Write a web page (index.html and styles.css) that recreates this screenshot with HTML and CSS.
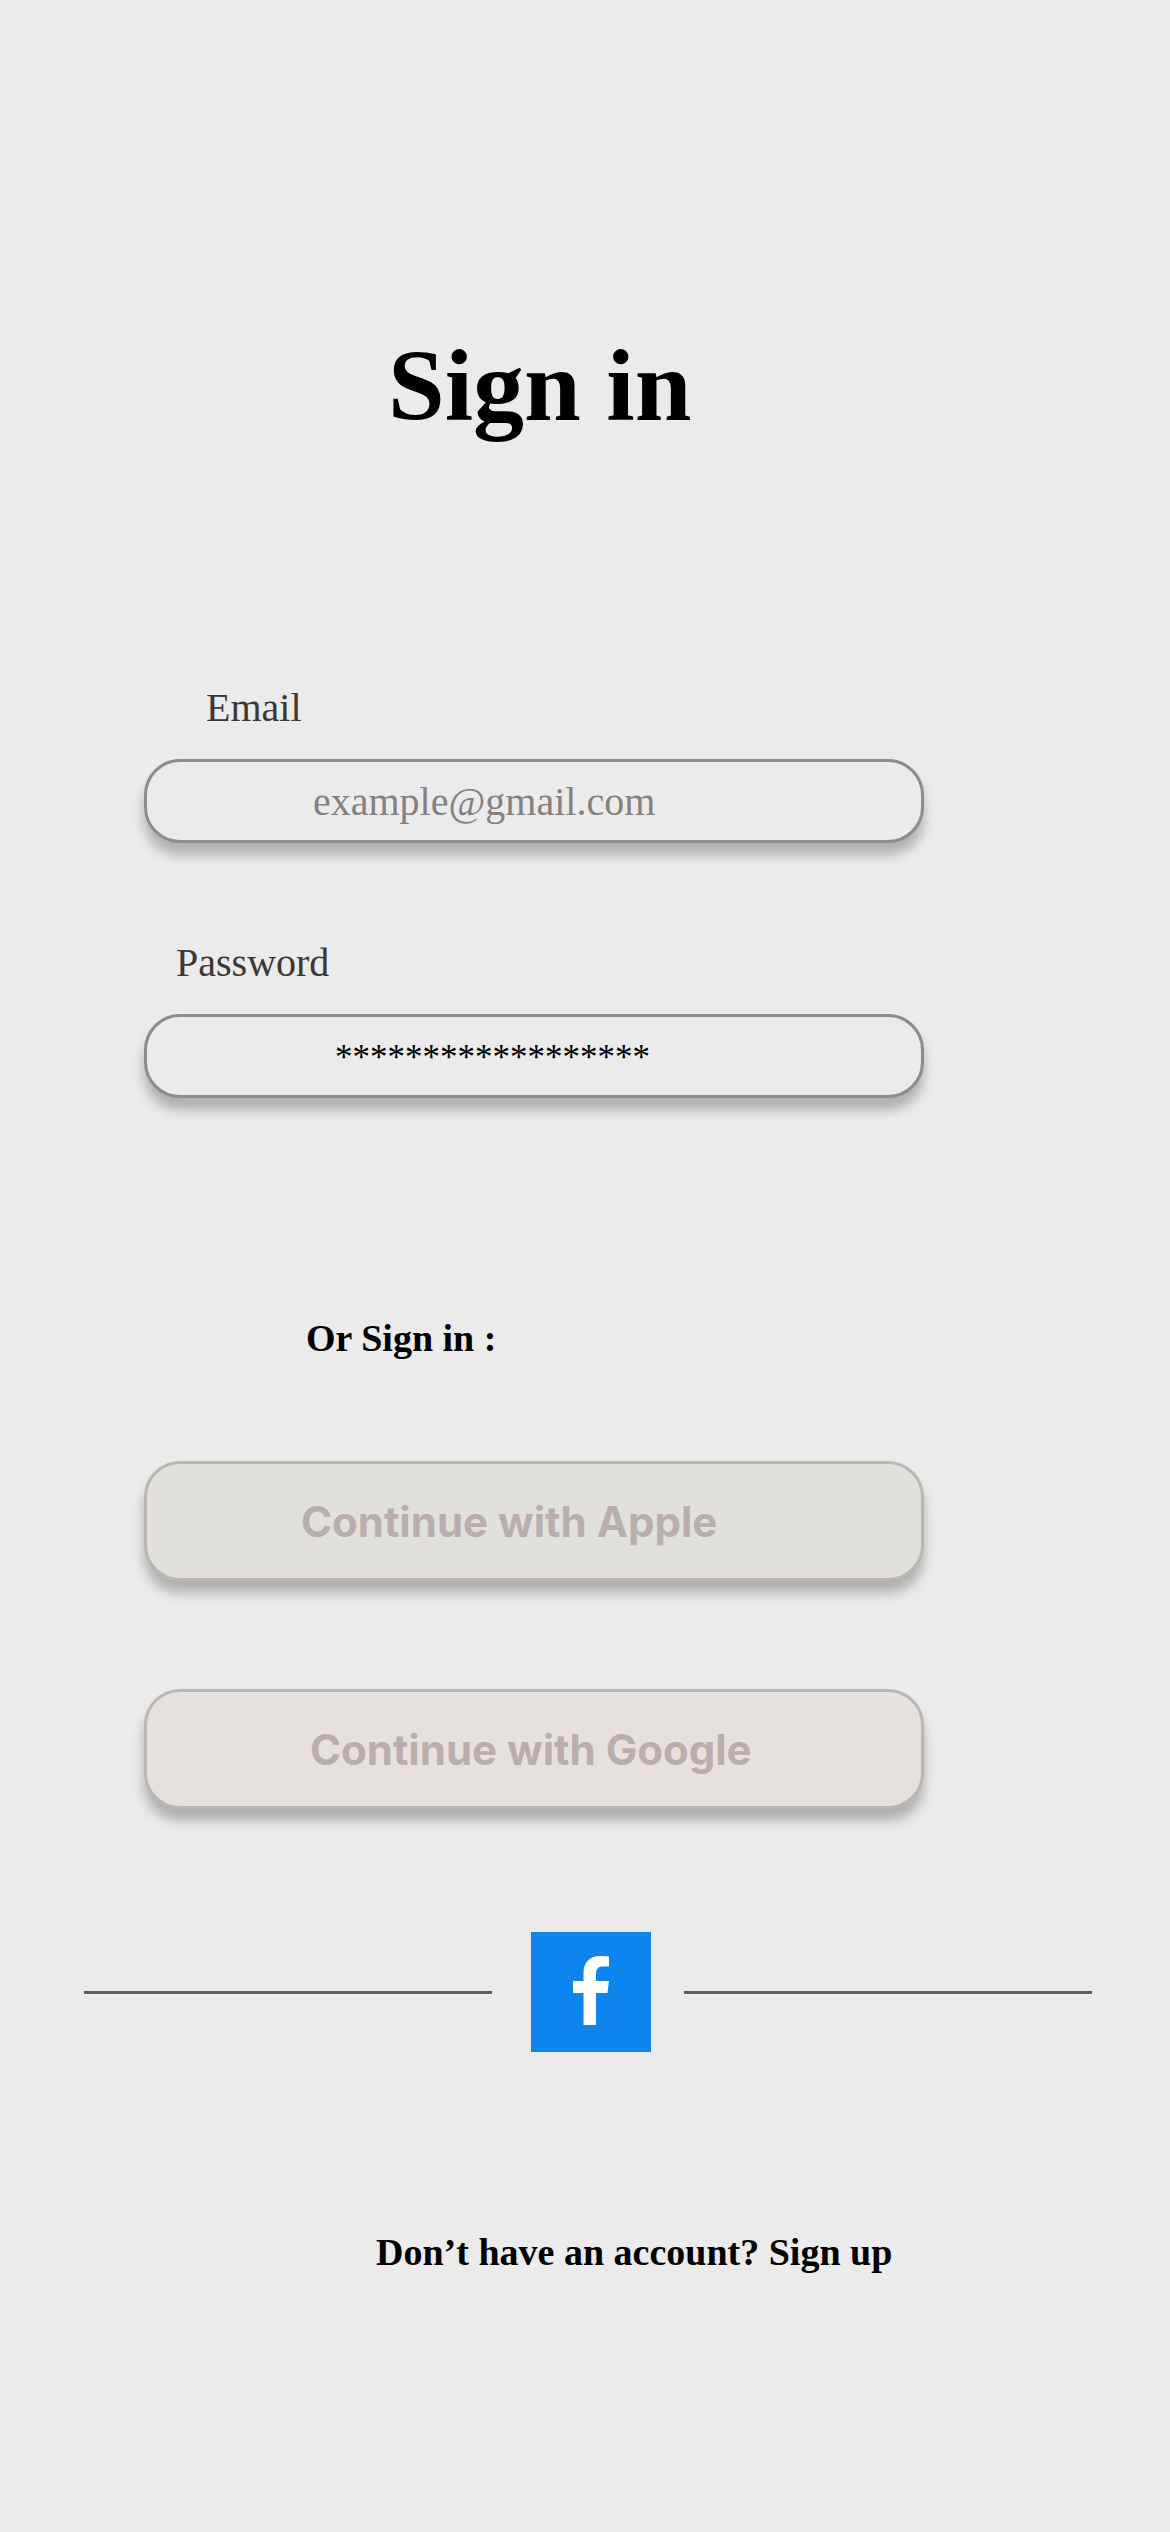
FILE: index.html
```
<!DOCTYPE html>
<html lang="en">
<head>
  <title>Sign in</title>
  <meta charset="UTF-8" />
  <meta name="viewport" content="width=device-width, initial-scale=1.0"/>
  <link rel="stylesheet" href="styles.css">
</head>
<body>
  <h1>Sign in</h1>

  <form class="form">
    <label class="email-label" for="email">Email</label>
    <input class="box email" type="email" id="email" placeholder="example@gmail.com" />

    <label class="password-label" for="password">Password</label>
    <input class="box password" type="text" id="password" value="******************" />

    <p class="or">Or Sign in :</p>
    <button class="box apple" type="button">Continue with Apple</button>
    <button class="box google" type="button">Continue with Google</button>
  </form>

  <div class="divider">
    <span class="line"></span>
    <a class="facebook" href="#" aria-label="Facebook">
      <svg viewBox="0 0 120 120" aria-hidden="true">
        <path fill="#fff" d="M78 24.500V34.500H72C67 34.500 65 37 65 42V49H78L76.500 61H65V93H52.500V61H42V49H52.500V41C52.500 30 59 24 69 24C73 24 76 24.200 78 24.500Z"/>
      </svg>
    </a>
    <span class="line"></span>
  </div>

  <p class="signup">Don’t have an account? <a href="#">Sign up</a></p>
</body>
</html>
```
FILE: styles.css
```
* { box-sizing: border-box; }
body { margin: 0; padding: 326px 0 200px; background: #ebebeb; color: #000; font-family: "Liberation Serif", serif; }
h1 { margin: 0; padding-left: 388px; font-size: 102px; line-height: 120px; }
p { margin: 0; font-weight: bold; font-size: 38px; line-height: 48px; }
label { display: block; margin-bottom: 27px; font-size: 40px; line-height: 48px; color: #3d3636; }

.form { width: 66.667%; margin: 238px 0 0 144px; }
.email-label { padding-left: 62px; }
.password-label { padding-left: 32px; }

.box { display: block; width: 100%; border: 3px solid #8c8c8c; border-radius: 36px; background: #ebebeb; box-shadow: 0 12px 12px rgba(0, 0, 0, 0.25); text-align: left; }
input.box { height: 84px; font-family: inherit; color: #000; outline: none; }
.email { margin-bottom: 96px; padding: 0 0 0 166px; font-size: 40px; }
.email::placeholder { color: #858080; opacity: 1; }
.password { padding: 4px 0 0 188px; font-size: 35px; }

.or { margin: 216px 0 99px; padding-left: 162px; }
button.box { height: 120px; border-color: #bbb6af; color: #b9adad; font-family: Inter, sans-serif; font-size: 42px; font-weight: bold; cursor: pointer; }
.box.apple { margin-bottom: 108px; padding: 0 0 0 154px; background: #e1e0dc; }
.box.google { padding: 0 0 0 163px; background: #e6e1dc; }

.divider { display: flex; align-items: center; margin-top: 123px; padding: 0 78px 0 84px; }
.line { flex: 1; height: 3px; background: #605d5d; }
.facebook { display: block; width: 120px; height: 120px; margin: 0 33px 0 39px; background: #0d84ee; }
.facebook svg { display: block; }

.signup { margin-top: 176px; padding-left: 376px; }
.signup a { color: inherit; text-decoration: none; }
```
